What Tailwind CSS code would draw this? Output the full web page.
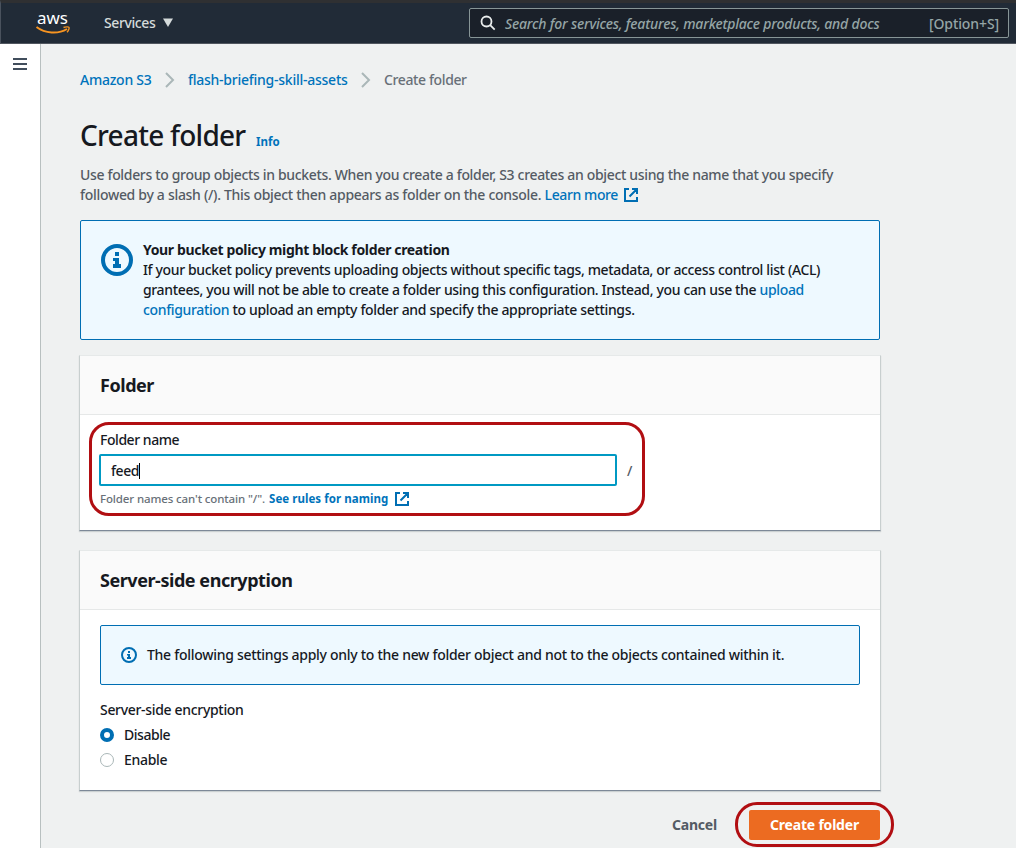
<!DOCTYPE html>
<html lang="en">
<head>
<meta charset="utf-8">
<title>Create folder</title>
<script src="https://cdn.jsdelivr.net/npm/@tailwindcss/browser@4"></script>
</head>
<body class="h-[848px] w-[1016px] overflow-hidden bg-[#eff1f1] font-['Noto_Sans',sans-serif] text-[14px] leading-5 font-medium text-[#16191f]">
<svg class="hidden">
  <symbol id="ext" viewBox="0 0 16 16"><g fill="none" stroke="#006eb3" stroke-width="2"><path d="M6 2H2v12h12v-4M9 2h5v5M14 2 6.500 9.500"/></g></symbol>
  <symbol id="info" viewBox="0 0 16 16"><circle cx="8" cy="8" r="7" fill="none" stroke="#006eb3" stroke-width="2"/><path fill="#006eb3" d="M7 4h2v2H7zM6 7h3v3h1v2H6v-2h1V8.500H6z"/></symbol>
</svg>
<header class="flex h-11 items-center border-t-[3px] border-b border-t-[#2f3032] border-b-[#50565f] border-l border-l-[#4a525d] bg-[#212b37] pr-[7px] pl-[35px]">
  <svg class="mt-px h-[26px] w-[36px] shrink-0 overflow-visible" viewBox="0 0 36 26">
    <text x="1" y="12.500" font-family="Noto Sans" font-size="16.500" font-weight="400" fill="#fff" textLength="31" lengthAdjust="spacingAndGlyphs">aws</text>
    <path d="M.5 16C9 22.500 22 23.500 31 18" fill="none" stroke="#f79421" stroke-width="2"/>
    <path d="M27.500 16.500c2-.8 5-.9 5.500-.2s-.5 3.500-2 5" fill="none" stroke="#f79421" stroke-width="1.400"/>
  </svg>
  <span class="ml-8 whitespace-nowrap tracking-[-0.4px] text-[#d5dbdb]">Services</span>
  <svg class="ml-[7px] h-2.5 w-3 shrink-0" viewBox="0 0 12 10"><path d="M1 .5h10L6 9z" fill="#d5dbdb"/></svg>
  <div class="ml-auto flex h-[30px] w-[540px] items-center rounded-xs border border-[#879596] bg-[#1a2029] pr-[9px] pl-2.5 text-[#95a5a6]">
    <svg class="h-4 w-4 shrink-0" viewBox="0 0 16 16" fill="none" stroke="#eaeded" stroke-width="1.800"><circle cx="6.500" cy="6.500" r="5"/><path d="m10.200 10.200 4.500 4.500"/></svg>
    <span class="mt-px ml-[9px] whitespace-nowrap tracking-[-0.2px] italic">Search for services, features, marketplace products, and docs</span>
    <span class="mt-px ml-auto whitespace-nowrap tracking-[-0.1px]">[Option+S]</span>
  </div>
</header>
<div class="flex h-[804px]">
  <aside class="w-[41px] shrink-0 border-r border-[#b8c0c0] bg-white pt-3.5 pl-[13px]">
    <div class="flex w-3.5 flex-col gap-[3px]"><i class="h-0.5 bg-[#414d5c]"></i><i class="h-0.5 bg-[#414d5c]"></i><i class="h-0.5 bg-[#414d5c]"></i></div>
  </aside>
  <main class="ml-[39px] w-[800px] shrink-0 pt-[26px]">
    <nav class="flex items-center whitespace-nowrap tracking-[-0.25px] text-[#0073bb]">
      <span class="w-[72px]">Amazon S3</span>
      <svg class="mr-3 ml-3 h-4 w-3 shrink-0" viewBox="0 0 12 16" fill="none" stroke="#aab7b8" stroke-width="2"><path d="m2 1 7 7-7 7"/></svg>
      <span class="w-[160px]">flash-briefing-skill-assets</span>
      <svg class="mr-3 ml-3 h-4 w-3 shrink-0" viewBox="0 0 12 16" fill="none" stroke="#aab7b8" stroke-width="2"><path d="m2 1 7 7-7 7"/></svg>
      <span class="tracking-[-0.38px] text-[#687078]">Create folder</span>
    </nav>
    <div class="mt-[27px] flex h-9 items-baseline whitespace-nowrap">
      <h1 class="w-[176px] text-[28px] leading-9 font-medium tracking-[-0.75px]">Create folder</h1>
      <a class="text-[11.5px] font-bold text-[#0073bb]">Info</a>
    </div>
    <p class="mt-3 whitespace-nowrap text-[#545b64]">
      <span class="block tracking-[-0.335px]">Use folders to group objects in buckets. When you create a folder, S3 creates an object using the name that you specify</span>
      <span class="flex items-center tracking-[-0.3px]">followed by a slash (/). This object then appears as folder on the console.&nbsp;<a class="tracking-[-0.4px] text-[#0073bb]">Learn more</a><svg class="ml-[5px] h-4 w-4"><use href="#ext"/></svg></span>
    </p>
    <section class="mt-[15px] flex h-[120px] w-[800px] rounded-xs border border-[#006eb3] bg-[#eef9ff] pt-[19px] pl-5">
      <svg class="mt-1 mr-2.5 h-8 w-8 shrink-0"><use href="#info"/></svg>
      <div class="whitespace-nowrap tracking-[-0.355px]">
        <b class="block">Your bucket policy might block folder creation</b>
        <span class="block">If your bucket policy prevents uploading objects without specific tags, metadata, or access control list (ACL)</span>
        <span class="block">grantees, you will not be able to create a folder using this configuration. Instead, you can use the <a class="text-[#0073bb]">upload</a></span>
        <span class="block tracking-[-0.34px]"><a class="text-[#0073bb]">configuration</a> to upload an empty folder and specify the appropriate settings.</span>
      </div>
    </section>
    <section class="mt-[15px] -ml-px h-44 w-[802px] border-x border-t border-b border-x-[#c8cfcf] border-t-[#e6e9e9] border-b-[#7d8998] bg-white shadow-[0_1px_1px_rgba(0,28,36,0.15)]">
      <h2 class="flex h-[59px] items-center border-b border-[#e6e8e8] bg-[#fafafa] pl-5 text-lg font-bold tracking-[-0.45px]">Folder</h2>
      <div class="relative pt-[15px] pl-5">
        <div class="pointer-events-none absolute top-[7px] left-[9px] h-[94px] w-[556px] rounded-[20px] border-3 border-[#b10e12]"></div>
        <label class="block tracking-[-0.45px]">Folder name</label>
        <div class="mt-[4px] -ml-px flex items-center">
          <div class="flex h-8 w-[518px] items-center rounded-xs border-2 border-[#0099c3] pl-[10px]"><span class="mt-0.5 tracking-[-0.4px]">feed</span><i class="mt-px h-4 w-px bg-black"></i></div>
          <span class="mt-px ml-[10px] text-[#545b64]">/</span>
        </div>
        <div class="mt-[3px] flex items-center text-[11.5px] leading-5 whitespace-nowrap text-[#687078]"><span class="w-[169px] tracking-[-0.12px]">Folder names can't contain "/".</span><b class="w-[120px] tracking-[0.05px] text-[#0073bb]">See rules for naming</b><svg class="ml-[5px] h-4 w-4"><use href="#ext"/></svg></div>
      </div>
    </section>
    <section class="mt-[19px] -ml-px h-[241px] w-[802px] border-x border-t border-b border-x-[#c8cfcf] border-t-[#e6e9e9] border-b-[#7d8998] bg-white shadow-[0_1px_1px_rgba(0,28,36,0.15)]">
      <h2 class="flex h-[59px] items-center border-b border-[#e6e8e8] bg-[#fafafa] pl-5 text-lg font-bold tracking-[-0.45px]">Server-side encryption</h2>
      <div class="px-5 pt-[15px]">
        <div class="flex h-[60px] w-[760px] items-center rounded-xs border border-[#006eb3] bg-[#eef9ff] pl-5 tracking-[-0.285px] whitespace-nowrap"><svg class="mr-2.5 h-4 w-4"><use href="#info"/></svg>The following settings apply only to the new folder object and not to the objects contained within it.</div>
        <div class="mt-[15px] tracking-[-0.32px]">Server-side encryption</div>
        <div class="mt-[5px] flex items-center gap-2.5"><i class="h-3.5 w-3.5 rounded-full border-4 border-[#006eb3] bg-white"></i><span class="tracking-[-0.45px]">Disable</span></div>
        <div class="mt-[5px] flex items-center gap-2.5"><i class="h-3.5 w-3.5 rounded-full border border-[#aab7b8] bg-white"></i><span class="tracking-[-0.3px]">Enable</span></div>
      </div>
    </section>
    <div class="mt-[11px] flex w-[814px] items-center justify-end font-bold tracking-[-0.2px]">
      <span class="mr-[18px] text-[#545b64]">Cancel</span>
      <div class="flex h-[45px] w-[159px] shrink-0 items-center justify-center rounded-[22px] border-3 border-[#b10e12]"><span class="flex h-[30px] w-[131px] items-center justify-center rounded-xs bg-[#ec6b21] whitespace-nowrap text-white">Create folder</span></div>
    </div>
  </main>
</div>
</body>
</html>
